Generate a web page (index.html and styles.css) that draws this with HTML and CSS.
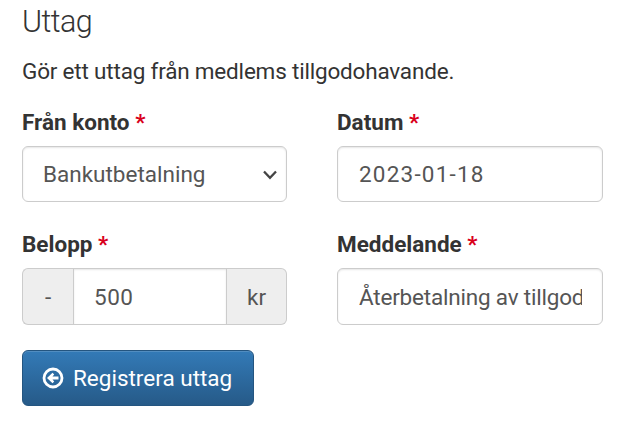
FILE: index.html
```html
<!DOCTYPE html>
<html lang="sv">
<head>
    <meta charset="UTF-8">
    <meta name="viewport" content="width=device-width, initial-scale=1.0">
    <title>Uttag</title>
    <link rel="stylesheet" href="styles.css">
</head>
<body>

    <h1 class="title">Uttag</h1>
    <p class="intro">Gör ett uttag från medlems tillgodohavande.</p>

    <form class="withdraw-form">
        <div class="form-grid">
            <div class="form-group">
                <label for="account">Från konto <span class="required">*</span></label>
                <div class="select-wrap">
                    <select id="account" class="form-control">
                        <option>Bankutbetalning</option>
                    </select>
                    <svg class="select-arrow" width="16" height="10" viewBox="0 0 16 10">
                        <path d="M2 1.5 L8 7.8 L14 1.5" fill="none" stroke="#444" stroke-width="2.3"/>
                    </svg>
                </div>
            </div>

            <div class="form-group">
                <label for="date">Datum <span class="required">*</span></label>
                <input type="text" id="date" class="form-control input-date" value="2023-01-18">
            </div>

            <div class="form-group">
                <label for="amount">Belopp <span class="required">*</span></label>
                <div class="input-group">
                    <span class="addon addon-left">-</span>
                    <input type="text" id="amount" class="form-control input-amount" value="500">
                    <span class="addon addon-right">kr</span>
                </div>
            </div>

            <div class="form-group">
                <label for="message">Meddelande <span class="required">*</span></label>
                <input type="text" id="message" class="form-control input-message" value="Återbetalning av tillgodohavande">
            </div>
        </div>

        <button type="button" class="btn-submit">
            <svg width="22" height="22" viewBox="0 0 22 22">
                <circle cx="11" cy="11" r="9" fill="none" stroke="#fff" stroke-width="2.8"/>
                <path d="M5 11 L10.5 5.8 L12.2 7.4 L10.5 9.4 H16.5 V12.6 H10.5 L12.2 14.6 L10.5 16.2 Z" fill="#fff"/>
            </svg>
            <span>Registrera uttag</span>
        </button>
    </form>

</body>
</html>
```

FILE: styles.css
```css
* {
    box-sizing: border-box;
}

body {
    margin: 0;
    padding: 4px 18px 0 22px;
    background-color: #fff;
    color: #333;
    font-family: Roboto, "Open Sans", sans-serif;
    font-size: 22.5px;
}

.title {
    margin: 0;
    font-size: 30.5px;
    font-weight: 300;
    line-height: 36px;
    letter-spacing: -0.6px;
}

.intro {
    margin: 15px 0 0;
    line-height: 32px;
    letter-spacing: -0.19px;
    white-space: nowrap;
}

.form-grid {
    display: grid;
    grid-template-columns: 265px 266px;
    column-gap: 50px;
    row-gap: 26px;
    margin-top: 19px;
}

.form-group label {
    display: block;
    height: 32px;
    margin-bottom: 8px;
    line-height: 32px;
    font-weight: 700;
    letter-spacing: 0;
    white-space: nowrap;
}

.required {
    color: #d9001b;
}

.form-control {
    display: block;
    width: 100%;
    height: 56px;
    padding: 0 20px;
    border: 1px solid #ccc;
    border-radius: 6px;
    background-color: #fff;
    box-shadow: inset 0 1px 2px rgba(0, 0, 0, 0.1);
    color: #555;
    font-family: inherit;
    font-size: 22.5px;
    letter-spacing: 0;
    appearance: none;
}

.input-date {
    padding-left: 21px;
    letter-spacing: 1.2px;
}

.input-amount {
    height: 57px;
    letter-spacing: 0.5px;
}

.input-message {
    height: 57px;
    padding-left: 21px;
    letter-spacing: -0.2px;
}

.select-wrap {
    position: relative;
}

.select-arrow {
    position: absolute;
    top: 24px;
    right: 9px;
    pointer-events: none;
}

.input-group {
    display: flex;
}

.input-group .form-control {
    flex: 1;
    min-width: 0;
    border-radius: 0;
}

.addon {
    display: flex;
    align-items: center;
    justify-content: center;
    height: 57px;
    border: 1px solid #ccc;
    background-color: #eee;
    color: #555;
}

.addon-left {
    width: 51px;
    border-right: none;
    border-radius: 6px 0 0 6px;
}

.addon-right {
    width: 60px;
    border-left: none;
    border-radius: 0 6px 6px 0;
}

.btn-submit {
    display: flex;
    align-items: center;
    gap: 9px;
    width: 232px;
    height: 56px;
    margin-top: 25px;
    padding: 0 19px;
    border: 1px solid #245580;
    border-radius: 6px;
    background-image: linear-gradient(#337ab7, #265a88);
    box-shadow: inset 0 1px 0 rgba(255, 255, 255, 0.15);
    color: #fff;
    font-family: inherit;
    font-size: 22.5px;
    letter-spacing: 0;
    white-space: nowrap;
}
```
